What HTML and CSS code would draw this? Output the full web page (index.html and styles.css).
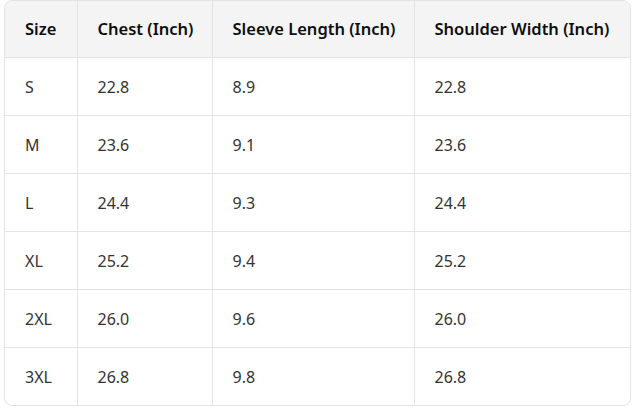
FILE: index.html
```html
<!DOCTYPE html>
<html lang="en">
  <head>
    <meta charset="UTF-8" />
    <meta name="viewport" content="width=device-width, initial-scale=1.0" />
    <title>Size Chart</title>
    <link rel="stylesheet" href="styles.css">
  </head>
  <body>
    <div class="table-wrap">
      <table class="size-table">
        <thead>
          <tr>
            <th class="col-size">Size</th>
            <th class="col-chest">Chest (Inch)</th>
            <th class="col-sleeve">Sleeve Length (Inch)</th>
            <th class="col-shoulder">Shoulder Width (Inch)</th>
          </tr>
        </thead>
        <tbody>
          <tr><td>S</td><td>22.8</td><td>8.9</td><td>22.8</td></tr>
          <tr><td>M</td><td>23.6</td><td>9.1</td><td>23.6</td></tr>
          <tr><td>L</td><td>24.4</td><td>9.3</td><td>24.4</td></tr>
          <tr><td>XL</td><td>25.2</td><td>9.4</td><td>25.2</td></tr>
          <tr><td>2XL</td><td>26.0</td><td>9.6</td><td>26.0</td></tr>
          <tr><td>3XL</td><td>26.8</td><td>9.8</td><td>26.8</td></tr>
        </tbody>
      </table>
    </div>
  </body>
</html>
```
FILE: styles.css
```css
body {
  margin: 0;
  padding: 0;
  background: #ffffff;
  font-family: "Noto Sans", "Open Sans", sans-serif;
}
.table-wrap {
  margin-left: 4px;
  width: 625px;
  border: 1px solid #e3e3e3;
  border-radius: 8px;
  overflow: hidden;
}
.size-table {
  width: 100%;
  border-collapse: collapse;
  table-layout: fixed;
  font-size: 16px;
  line-height: 24px;
}
.size-table th,
.size-table td {
  box-sizing: border-box;
  text-align: left;
  padding: 17px 20px 16px;
  border-left: 1px solid #e3e3e3;
  border-top: 1px solid #e3e3e3;
  white-space: nowrap;
}
.size-table th:first-child,
.size-table td:first-child {
  border-left: none;
}
.size-table th {
  border-top: none;
  padding: 16px 20px;
  background: #f4f4f4;
  color: #0d0d0d;
  font-size: 16.5px;
  font-weight: 600;
}
.size-table td {
  color: #333333;
  font-weight: 400;
}
.col-size {
  width: 72px;
}
.col-chest {
  width: 135px;
}
.col-sleeve {
  width: 202px;
}
```
